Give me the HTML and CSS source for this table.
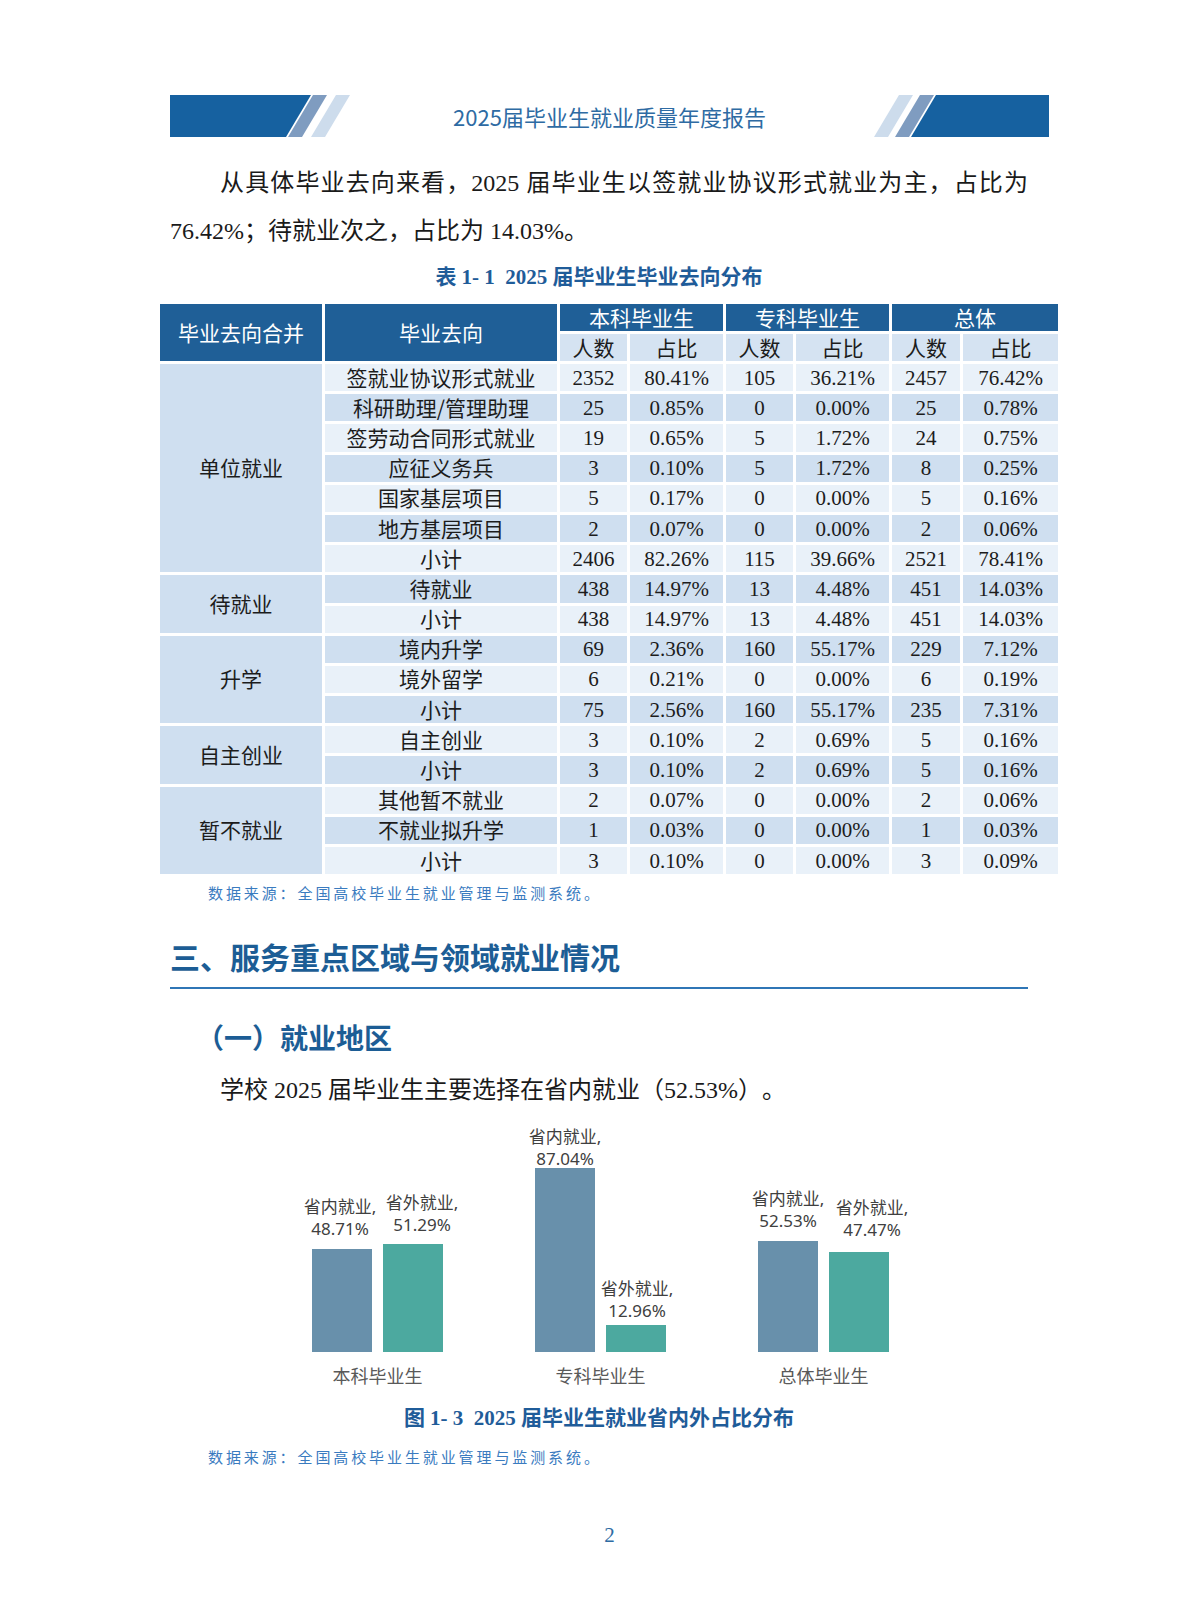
FILE: index.html
```html
<!DOCTYPE html>
<html lang="zh-CN">
<head>
<meta charset="utf-8">
<title>2025届毕业生就业质量年度报告</title>
<link rel="stylesheet" href="styles.css">
</head>
<body>
<div class="page">
  <header class="band">
    <svg class="band-art" width="879" height="42" viewBox="0 0 879 42" aria-hidden="true">
      <polygon points="0,0 141,0 116,42 0,42" fill="#1661a0"/>
      <polygon points="143,0 157,0 132,42 118,42" fill="#7f9cc0"/>
      <polygon points="166,0 180,0 155,42 141,42" fill="#cddcec"/>
      <polygon points="729,0 743,0 718,42 704,42" fill="#cddcec"/>
      <polygon points="750,0 764,0 739,42 725,42" fill="#7f9cc0"/>
      <polygon points="766,0 879,0 879,42 741,42" fill="#1661a0"/>
    </svg>
    <div class="band-title">2025届毕业生就业质量年度报告</div>
  </header>

  <p class="para first">从具体毕业去向来看，2025 届毕业生以签就业协议形式就业为主，占比为 76.42%；待就业次之，占比为 14.03%。</p>

  <div class="caption">表 1- 1&nbsp; 2025 届毕业生毕业去向分布</div>

  <div class="tbl">
    <div class="th h-a">毕业去向合并</div>
    <div class="th h-b">毕业去向</div>
    <div class="th h-c">本科毕业生</div>
    <div class="th h-d">专科毕业生</div>
    <div class="th h-e">总体</div>
    <div class="sh">人数</div><div class="sh">占比</div>
    <div class="sh">人数</div><div class="sh">占比</div>
    <div class="sh">人数</div><div class="sh">占比</div>

    <div class="grp g1">单位就业</div>
    <div class="grp g2">待就业</div>
    <div class="grp g3">升学</div>
    <div class="grp g4">自主创业</div>
    <div class="grp g5">暂不就业</div>

    <div class="row lt"><div>签就业协议形式就业</div><div>2352</div><div>80.41%</div><div>105</div><div>36.21%</div><div>2457</div><div>76.42%</div></div>
    <div class="row md"><div>科研助理/管理助理</div><div>25</div><div>0.85%</div><div>0</div><div>0.00%</div><div>25</div><div>0.78%</div></div>
    <div class="row lt"><div>签劳动合同形式就业</div><div>19</div><div>0.65%</div><div>5</div><div>1.72%</div><div>24</div><div>0.75%</div></div>
    <div class="row md"><div>应征义务兵</div><div>3</div><div>0.10%</div><div>5</div><div>1.72%</div><div>8</div><div>0.25%</div></div>
    <div class="row lt"><div>国家基层项目</div><div>5</div><div>0.17%</div><div>0</div><div>0.00%</div><div>5</div><div>0.16%</div></div>
    <div class="row md"><div>地方基层项目</div><div>2</div><div>0.07%</div><div>0</div><div>0.00%</div><div>2</div><div>0.06%</div></div>
    <div class="row lt"><div>小计</div><div>2406</div><div>82.26%</div><div>115</div><div>39.66%</div><div>2521</div><div>78.41%</div></div>
    <div class="row md"><div>待就业</div><div>438</div><div>14.97%</div><div>13</div><div>4.48%</div><div>451</div><div>14.03%</div></div>
    <div class="row lt"><div>小计</div><div>438</div><div>14.97%</div><div>13</div><div>4.48%</div><div>451</div><div>14.03%</div></div>
    <div class="row md"><div>境内升学</div><div>69</div><div>2.36%</div><div>160</div><div>55.17%</div><div>229</div><div>7.12%</div></div>
    <div class="row lt"><div>境外留学</div><div>6</div><div>0.21%</div><div>0</div><div>0.00%</div><div>6</div><div>0.19%</div></div>
    <div class="row md"><div>小计</div><div>75</div><div>2.56%</div><div>160</div><div>55.17%</div><div>235</div><div>7.31%</div></div>
    <div class="row lt"><div>自主创业</div><div>3</div><div>0.10%</div><div>2</div><div>0.69%</div><div>5</div><div>0.16%</div></div>
    <div class="row md"><div>小计</div><div>3</div><div>0.10%</div><div>2</div><div>0.69%</div><div>5</div><div>0.16%</div></div>
    <div class="row lt"><div>其他暂不就业</div><div>2</div><div>0.07%</div><div>0</div><div>0.00%</div><div>2</div><div>0.06%</div></div>
    <div class="row md"><div>不就业拟升学</div><div>1</div><div>0.03%</div><div>0</div><div>0.00%</div><div>1</div><div>0.03%</div></div>
    <div class="row lt"><div>小计</div><div>3</div><div>0.10%</div><div>0</div><div>0.00%</div><div>3</div><div>0.09%</div></div>
  </div>

  <div class="note">数据来源：全国高校毕业生就业管理与监测系统。</div>

  <h2 class="sec">三、服务重点区域与领域就业情况</h2>
  <h3 class="sub">（一）就业地区</h3>

  <p class="para">学校 2025 届毕业生主要选择在省内就业（52.53%）。</p>

  <div class="chart">
    <div class="plot">
      <div class="grpbars">
        <div class="bar in" style="height:103px"><span class="dl" style="--g:10px;--dx:-2px">省内就业,<br>48.71%</span></div>
        <div class="bar out" style="height:108px"><span class="dl" style="--g:9px;--dx:9px">省外就业,<br>51.29%</span></div>
      </div>
      <div class="grpbars">
        <div class="bar in" style="height:184px"><span class="dl" style="--g:-1px;--dx:0px">省内就业,<br>87.04%</span></div>
        <div class="bar out" style="height:27px"><span class="dl" style="--g:4px;--dx:1px">省外就业,<br>12.96%</span></div>
      </div>
      <div class="grpbars">
        <div class="bar in" style="height:111px"><span class="dl" style="--g:10px;--dx:0px">省内就业,<br>52.53%</span></div>
        <div class="bar out" style="height:100px"><span class="dl" style="--g:12px;--dx:13px">省外就业,<br>47.47%</span></div>
      </div>
    </div>
    <div class="cats">
      <div class="cat">本科毕业生</div>
      <div class="cat">专科毕业生</div>
      <div class="cat">总体毕业生</div>
    </div>
  </div>

  <div class="caption fig">图 1- 3&nbsp; 2025 届毕业生就业省内外占比分布</div>
  <div class="note note2">数据来源：全国高校毕业生就业管理与监测系统。</div>

  <footer class="pno">2</footer>
</div>
</body>
</html>
```

FILE: styles.css
```css
html, body {
  margin: 0;
  padding: 0;
  background: #ffffff;
}

body {
  width: 1190px;
  font-family: "Liberation Serif", "Noto Sans CJK SC", serif;
  color: #1a1a1a;
  text-spacing-trim: space-all;
}

.page {
  width: 858px;
  padding: 95px 0 40px 170px;
}

/* header band */
.band {
  width: 879px;
  height: 42px;
  display: grid;
}
.band-art,
.band-title {
  grid-area: 1 / 1;
}
.band-art {
  display: block;
}
.band-title {
  align-self: center;
  justify-self: center;
  font-family: "Noto Sans CJK SC", sans-serif;
  font-size: 22px;
  letter-spacing: 0;
  line-height: 30px;
  color: #2e6ba3;
}

/* paragraphs */
.para {
  margin: 10px 0 0;
  font-size: 24px;
  line-height: 48px;
  text-indent: 50px;
  text-align: justify;
}
.para.first {
  margin-top: 22px;
}

.caption {
  margin-top: 7px;
  text-align: center;
  font-family: "Liberation Serif", "Noto Sans CJK SC", serif;
  font-weight: bold;
  font-size: 21px;
  line-height: 30px;
  color: #1f5c99;
}

/* table */
.tbl {
  margin-top: 12px;
  margin-left: -10px;
  width: 898px;
  display: grid;
  grid-template-columns: 162px 232px 67px 93px 67px 93px 68px 95px;
  grid-template-rows: 27px 27px repeat(17, 27.2px);
  gap: 3px;
  font-size: 21px;
  line-height: 24px;
  color: #1c1c1c;
}
.tbl > div:not(.row),
.row > div {
  display: flex;
  align-items: center;
  justify-content: center;
  white-space: nowrap;
}
.row {
  display: contents;
}
.row > div:first-child,
.grp,
.sh,
.th {
  font-family: "Noto Sans CJK SC", sans-serif;
  font-size: 21px;
  padding-bottom: 2px;
}
.row.lt > div {
  background: #e9f1f9;
}
.row.md > div {
  background: #cfdff0;
}
.th {
  background: #1f5f97;
  color: #ffffff;
}
.h-a { grid-column: 1; grid-row: 1 / 3; }
.h-b { grid-column: 2; grid-row: 1 / 3; }
.h-c { grid-column: 3 / 5; grid-row: 1; }
.h-d { grid-column: 5 / 7; grid-row: 1; }
.h-e { grid-column: 7 / 9; grid-row: 1; }
.sh {
  background: #d5e3f2;
}
.grp {
  background: #cfdff0;
  grid-column: 1;
}
.g1 { grid-row: 3 / span 7; }
.g2 { grid-row: 10 / span 2; }
.g3 { grid-row: 12 / span 3; }
.g4 { grid-row: 15 / span 2; }
.g5 { grid-row: 17 / span 3; }

/* source note */
.note {
  margin-top: 7px;
  padding-left: 38px;
  font-family: "Noto Sans CJK SC", sans-serif;
  font-size: 15px;
  letter-spacing: 2.9px;
  line-height: 24px;
  color: #3a7bbf;
}
.note2 {
  margin-top: 12px;
}

/* headings */
.sec {
  margin: 31px 0 0;
  padding-bottom: 11px;
  border-bottom: 2px solid #2f76b6;
  font-family: "Noto Sans CJK SC", sans-serif;
  font-weight: bold;
  font-size: 30px;
  line-height: 40px;
  color: #1c5d95;
}
.sub {
  margin: 29px 0 0;
  padding-left: 26px;
  font-family: "Noto Sans CJK SC", sans-serif;
  font-weight: bold;
  font-size: 28px;
  line-height: 38px;
  color: #1c5d95;
}

/* chart */
.chart {
  width: 858px;
}
.plot {
  height: 238px;
  display: flex;
  align-items: flex-end;
  padding-left: 142px;
  gap: 92px;
}
.grpbars {
  width: 131px;
  display: flex;
  align-items: flex-end;
  gap: 11px;
}
.bar {
  position: relative;
  width: 60px;
}
.bar.in {
  background: #6890ab;
}
.bar.out {
  background: #4ca99f;
}
.dl {
  position: absolute;
  left: 50%;
  bottom: calc(100% + var(--g));
  transform: translateX(calc(-50% + var(--dx)));
  white-space: nowrap;
  text-align: center;
  font-family: "Noto Sans", "Noto Sans CJK SC", sans-serif;
  font-size: 17px;
  line-height: 21.5px;
  color: #404040;
}
.cats {
  margin-top: 11px;
  display: flex;
  padding-left: 142px;
  gap: 92px;
}
.cat {
  width: 131px;
  text-align: center;
  font-family: "Noto Sans CJK SC", sans-serif;
  font-size: 18px;
  line-height: 24px;
  color: #595959;
}
.caption.fig {
  margin-top: 16px;
}

/* page number */
.pno {
  width: 879px;
  margin-top: 54px;
  text-align: center;
  font-family: "Liberation Serif", serif;
  font-size: 21px;
  line-height: 24px;
  color: #2e6ba3;
}
```
